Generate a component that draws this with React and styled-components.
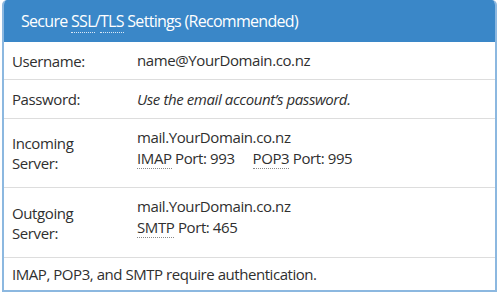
import styled, { createGlobalStyle } from "styled-components";

const Global = createGlobalStyle`
  body {
    margin: 0;
    background: #ffffff;
    font-family: "Open Sans", "Noto Sans", sans-serif;
    color: #2f2f2f;
  }
`;

const Panel = styled.div`
  margin: 0 3px 0 2px;
  border: 2px solid #8cb8e0;
  border-top: none;
  border-radius: 5px 5px 0 0;
  overflow: hidden;
  height: 292px;
  box-sizing: border-box;
`;

const Heading = styled.div`
  background: #3a87c8;
  color: #ffffff;
  font-size: 16px;
  letter-spacing: -0.7px;
  height: 42px;
  line-height: 22px;
  padding: 10px 0 0 17px;
  box-sizing: border-box;
`;

const Abbr = styled.abbr`
  text-decoration: none;
  border-bottom: 1px dotted ${(p) => (p.$light ? "#dbe9f6" : "#888")};
  cursor: help;
`;

const Row = styled.div`
  display: grid;
  grid-template-columns: 133px 1fr;
  height: ${(p) => p.$h}px;
  border-bottom: 1px solid #dddddd;
  box-sizing: border-box;
  font-size: 15px;
  letter-spacing: -0.4px;
`;

const Label = styled.div`
  padding-left: 8px;
  display: flex;
  align-items: center;
  line-height: 20px;
`;

const Value = styled.div`
  display: flex;
  flex-direction: column;
  justify-content: ${(p) => (p.$top ? "flex-start" : "center")};
  padding-top: ${(p) => (p.$top ? "8px" : "0")};
  line-height: 21px;
  font-style: ${(p) => (p.$italic ? "italic" : "normal")};
`;

const Ports = styled.div`
  display: flex;
  gap: 18px;
`;

const Note = styled.div`
  font-size: 15px;
  letter-spacing: -0.45px;
  line-height: 21px;
  padding: 6px 0 0 8px;
`;

export default function App() {
  return (
    <>
      <Global />
      <Panel>
        <Heading>
          Secure <Abbr $light title="Secure Sockets Layer">SSL</Abbr>/
          <Abbr $light title="Transport Layer Security">TLS</Abbr> Settings (Recommended)
        </Heading>
        <Row $h={38}>
          <Label>Username:</Label>
          <Value>name@YourDomain.co.nz</Value>
        </Row>
        <Row $h={39}>
          <Label>Password:</Label>
          <Value $italic>Use the email account’s password.</Value>
        </Row>
        <Row $h={69}>
          <Label>
            Incoming
            <br />
            Server:
          </Label>
          <Value $top>
            <span>mail.YourDomain.co.nz</span>
            <Ports>
              <span>
                <Abbr>IMAP</Abbr> Port: 993
              </span>
              <span>
                <Abbr>POP3</Abbr> Port: 995
              </span>
            </Ports>
          </Value>
        </Row>
        <Row $h={70}>
          <Label>
            Outgoing
            <br />
            Server:
          </Label>
          <Value $top>
            <span>mail.YourDomain.co.nz</span>
            <span>
              <Abbr>SMTP</Abbr> Port: 465
            </span>
          </Value>
        </Row>
        <Note>IMAP, POP3, and SMTP require authentication.</Note>
      </Panel>
    </>
  );
}
